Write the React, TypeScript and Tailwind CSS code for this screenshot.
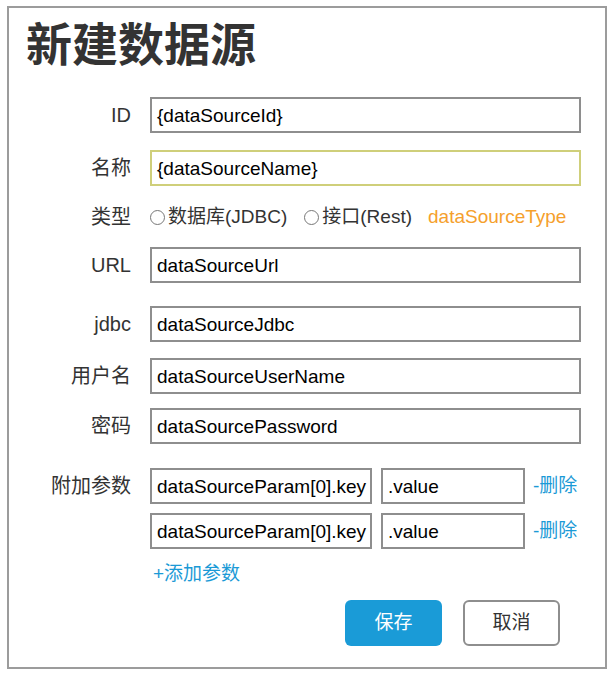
const font = "font-['Liberation_Sans','Noto_Sans_CJK_SC',sans-serif]";

function Field({ label, value, focused, className = '' }: { label: string; value: string; focused?: boolean; className?: string }) {
  return (
    <div className={`flex items-center ${className}`}>
      <div className="w-[141px] shrink-0 pr-[19px] text-right text-[20px] text-[#333]">{label}</div>
      <div
        className={`flex h-[36px] w-[431px] items-center border-2 px-[5px] pt-[2px] text-[19px] text-black ${
          focused ? 'border-[#cfcf7a]' : 'border-[#8e8e8e]'
        }`}
      >
        {value}
      </div>
    </div>
  );
}

function Radio({ label }: { label: string }) {
  return (
    <div className="flex items-center gap-[3px]">
      <span className="h-[15px] w-[15px] rounded-full border border-[#777]" />
      <span>{label}</span>
    </div>
  );
}

function ParamRow({ className = '', label }: { className?: string; label?: string }) {
  return (
    <div className={`flex items-center ${className}`}>
      <div className="w-[141px] shrink-0 pr-[19px] text-right text-[20px] text-[#333]">{label}</div>
      <div className="flex h-[36px] w-[222px] items-center border-2 border-[#8e8e8e] px-[5px] pt-[2px] text-[19px] text-black">
        dataSourceParam[0].key
      </div>
      <div className="ml-[9px] flex h-[36px] w-[144px] items-center border-2 border-[#8e8e8e] px-[5px] pt-[2px] text-[19px] text-black">
        .value
      </div>
      <a className="ml-[8px] text-[19px] text-[#1b9ad6]">-删除</a>
    </div>
  );
}

export default function App() {
  return (
    <div className={`h-[677px] w-[616px] bg-white pl-[7px] pt-[6px] ${font}`}>
      <div className="h-[663px] w-[600px] border-2 border-[#9c9c9c] bg-white">
        {/* Title */}
        <h1 className="pl-[17px] pt-[11px] text-[46px] leading-[52px] font-bold text-[#333]">新建数据源</h1>

        <Field className="mt-[26px]" label="ID" value="{dataSourceId}" />
        <Field className="mt-[17px]" label="名称" value="{dataSourceName}" focused />

        {/* 类型 */}
        <div className="mt-[13px] flex h-[36px] items-center">
          <div className="w-[141px] shrink-0 pr-[19px] text-right text-[20px] text-[#333]">类型</div>
          <div className="flex items-center text-[19px] text-[#333]">
            <Radio label="数据库(JDBC)" />
            <div className="ml-[17px]">
              <Radio label="接口(Rest)" />
            </div>
            <span className="ml-[16px] text-[#f5a02c]">dataSourceType</span>
          </div>
        </div>

        <Field className="mt-[12px]" label="URL" value="dataSourceUrl" />
        <Field className="mt-[23px]" label="jdbc" value="dataSourceJdbc" />
        <Field className="mt-[16px]" label="用户名" value="dataSourceUserName" />
        <Field className="mt-[14px]" label="密码" value="dataSourcePassword" />

        {/* 附加参数 */}
        <ParamRow className="mt-[24px]" label="附加参数" />
        <ParamRow className="mt-[9px]" />
        <div className="mt-[12px] flex h-[26px] items-center pl-[144px] text-[19px] text-[#1b9ad6]">+添加参数</div>

        {/* Buttons */}
        <div className="mt-[13px] flex gap-[21px] pl-[336px]">
          <button className="h-[46px] w-[97px] rounded-[6px] bg-[#1a9bd7] text-[19px] text-white">保存</button>
          <button className="h-[46px] w-[97px] rounded-[6px] border-2 border-[#8e8e8e] bg-white text-[19px] text-[#333]">
            取消
          </button>
        </div>
      </div>
    </div>
  );
}
